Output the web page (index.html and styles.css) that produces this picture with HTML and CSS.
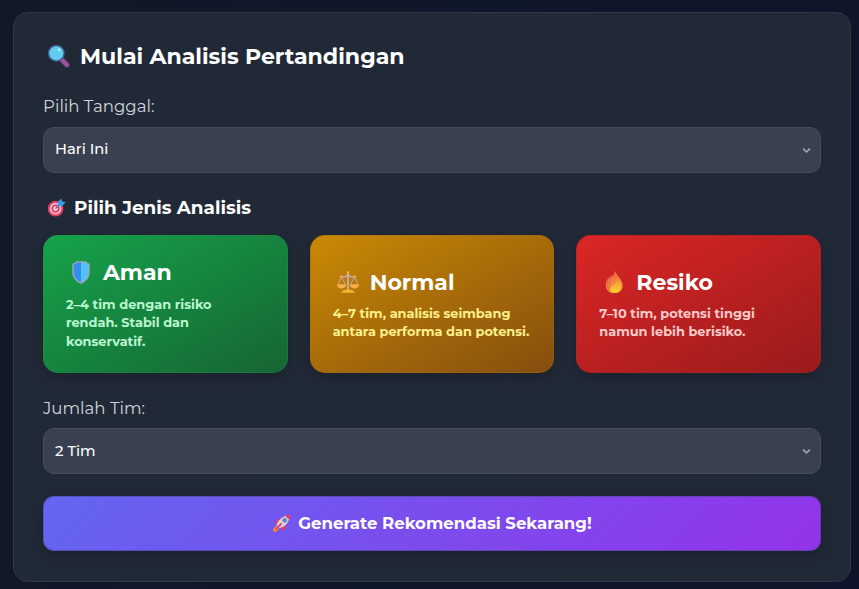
FILE: index.html
```html
<!DOCTYPE html>
<html lang="id">

<head>
    <meta charset="utf-8">
    <meta name="viewport" content="width=device-width, initial-scale=1.0">
    <title>Analisis Pertandingan</title>
    <link rel="stylesheet" href="styles.css">
</head>

<body>

    <main class="panel">
        <h1 class="judul">
            <svg class="ikon-cari" viewBox="0 0 24 24">
                <path d="M14.5 15.5l5.3 5.3" stroke="#6b3f78" stroke-width="5.4" stroke-linecap="round" />
                <path d="M15.8 16.6l4.2 4.2" stroke="#985399" stroke-width="4" stroke-linecap="round" />
                <circle cx="9.3" cy="9.3" r="7.8" fill="#5ecdf0" stroke="#465a8f" stroke-width="1.4" />
                <circle cx="12.1" cy="5.7" r="1.2" fill="#c5effc" />
            </svg>
            <span>Mulai Analisis Pertandingan</span>
        </h1>

        <form>
            <label class="label" for="tanggal">Pilih Tanggal:</label>
            <div class="pilihan">
                <select id="tanggal">
                    <option>Hari Ini</option>
                    <option>Besok</option>
                </select>
                <svg class="panah" viewBox="0 0 8 6"><path d="M1 1.3l3 3 3-3" /></svg>
            </div>

            <h2 class="subjudul">
                <svg class="ikon-target" viewBox="0 0 20 20">
                    <circle cx="9" cy="11.2" r="8.2" fill="#e13d69" />
                    <circle cx="9" cy="11.2" r="6.2" fill="#f2bdca" />
                    <circle cx="9" cy="11.2" r="4.4" fill="#e13d69" />
                    <circle cx="9" cy="11.2" r="2.5" fill="#f8cad5" />
                    <path d="M9 11.2l5.6-5.6" stroke="#7f5c8d" stroke-width="1.3" />
                    <path d="M11 8.8l.4-4.2L15 .6l.8 3.2 3.9.8-4.2 4.1z" fill="#35a8ee" />
                    <path d="M12.7 7.3l4-4" stroke="#286fb0" stroke-width=".8" />
                </svg>
                <span>Pilih Jenis Analisis</span>
            </h2>

            <div class="jenis">
                <article class="kartu aman">
                    <h3>
                        <svg viewBox="0 0 24 24">
                            <path d="M4 4.2q2-.2 3.4-2.3h9.2Q18 4 20 4.2v8.3q0 6.8-8 10.7-8-3.9-8-10.7z" fill="#368df1" />
                            <path d="M12 1.9h4.6Q18 4 20 4.2v8.3q0 6.8-8 10.7z" fill="#52c3fa" />
                            <path d="M4 4.2q2-.2 3.4-2.3h9.2Q18 4 20 4.2v8.3q0 6.8-8 10.7-8-3.9-8-10.7z" fill="none" stroke="#a6a6b8" stroke-width="1.4" />
                        </svg>
                        <span>Aman</span>
                    </h3>
                    <p>2–4 tim dengan risiko<br>rendah. Stabil dan<br>konservatif.</p>
                </article>
                <article class="kartu normal">
                    <h3>
                        <svg viewBox="0 0 24 24">
                            <g fill="none" stroke="#c4b0b4" stroke-width=".9">
                                <path d="M12 3v17" stroke-width="1.8" />
                                <path d="M4.7 6.4q4 2 7.3-1.6 3.3 3.6 7.3 1.6" stroke-width="1.3" />
                                <path d="M5.5 7L1.7 14.5M5.5 7l4 7.5M18.5 7l-4 7.5M18.5 7l3.8 7.5" />
                            </g>
                            <path d="M.8 14.2h9.6q-1 4.3-4.8 4.3T.8 14.2zM13.6 14.2h9.6q-1 4.3-4.8 4.3t-4.8-4.3z" fill="#f9ad4c" />
                            <path d="M5.3 22.8q.8-2.9 6.7-3.2 5.9.3 6.7 3.2z" fill="#f7b536" />
                            <circle cx="12" cy="2.5" r="1.5" fill="#f6a83c" />
                            <circle cx="5.3" cy="6.6" r="1.3" fill="#f6a35c" />
                            <circle cx="18.7" cy="6.6" r="1.3" fill="#f6a35c" />
                        </svg>
                        <span>Normal</span>
                    </h3>
                    <p>4–7 tim, analisis seimbang<br>antara performa dan potensi.</p>
                </article>
                <article class="kartu resiko">
                    <h3>
                        <svg viewBox="0 0 24 24">
                            <defs>
                                <linearGradient id="api" x1="0" y1="0" x2=".5" y2="1">
                                    <stop offset="0" stop-color="#ef484b" />
                                    <stop offset=".65" stop-color="#f58a3e" />
                                    <stop offset="1" stop-color="#fba52f" />
                                </linearGradient>
                                <linearGradient id="nyala" x1=".6" y1="0" x2=".5" y2="1">
                                    <stop offset="0" stop-color="#f7933b" />
                                    <stop offset="1" stop-color="#ffd236" />
                                </linearGradient>
                            </defs>
                            <path d="M13 .4c1.1 4.6 7.6 9 7.6 15 0 5-3.6 7.7-8 7.700-5 0-8.900-3-8.900-8.200 0-3.100 1.400-5.400 3.100-8l.4 2 1.700-4 .8 2.200C11 5.400 12.500 3.500 13 .4z" fill="url(#api)" />
                            <path d="M5.5 10.5c-.7 4-.2 7.500 2.200 10M8.500 7.500c-2 5-1.700 8.500-.2 11.500" fill="none" stroke="#d9643f" stroke-width=".8" />
                            <path d="M15.8 9.5c2.500 4.200 4 7.400 2.200 10.600-1.900 3.500-8.500 3.500-9.700-.2-1-3.700 5.200-4 7.500-10.400z" fill="url(#nyala)" />
                        </svg>
                        <span>Resiko</span>
                    </h3>
                    <p>7–10 tim, potensi tinggi<br>namun lebih berisiko.</p>
                </article>
            </div>

            <label class="label" for="jumlah">Jumlah Tim:</label>
            <div class="pilihan">
                <select id="jumlah">
                    <option>2 Tim</option>
                    <option>3 Tim</option>
                    <option>4 Tim</option>
                </select>
                <svg class="panah" viewBox="0 0 8 6"><path d="M1 1.3l3 3 3-3" /></svg>
            </div>

            <button class="generate" type="button">
                <svg viewBox="0 0 18 18">
                    <path d="M5 8.3L1.7 9.5l3-4.3 4-.5zM9.7 13l-1.2 3.8 4.3-3.3.5-4z" fill="#e93e64" />
                    <path d="M4 11l-3 3.2.2 2.6 2.7-.1L7 14z" fill="#fa8b2b" />
                    <path d="M4 13.800Q4 5.500 13.200 1.500l3.300 3.100Q13.500 13.500 4 13.800z" fill="#dcd2e2" />
                    <path d="M12.5 2Q15 .6 17.300.7q.1 2.400-1 4.700z" fill="#ed3d5f" />
                    <path d="M4 14l4.500-4.500" stroke="#e93e64" stroke-width="1.8" stroke-linecap="round" />
                    <circle cx="12" cy="6" r="1.9" fill="#4697d5" stroke="#816c9c" stroke-width=".7" />
                </svg>
                <span>Generate Rekomendasi Sekarang!</span>
            </button>
        </form>
    </main>

</body>

</html>
```

FILE: styles.css
```css
* {
    box-sizing: border-box;
}

body {
    margin: 0;
    height: 589px;
    padding: 12px 8px 7px 13px;
    overflow: hidden;
    background: linear-gradient(100deg, #111827, #0f172a 50%, #10142a);
    font-family: Montserrat, Inter, sans-serif;
    color: white;
}

h1,
h2,
h3,
p {
    margin: 0;
}

svg {
    display: block;
    flex: none;
    fill: none;
}

.panel {
    height: 570px;
    padding: 27px 29px 0;
    background: linear-gradient(#212937, #202936);
    border: 1px solid #303947;
    border-radius: 15px;
}

.judul {
    display: flex;
    align-items: center;
    height: 32px;
    margin-bottom: 22px;
    padding-left: 4px;
    font-size: 22.1px;
    font-weight: 700;
}

.ikon-cari {
    width: 24px;
    height: 24px;
    margin-right: 9px;
}

.label {
    display: block;
    height: 25px;
    margin-bottom: 8px;
    line-height: 25px;
    font-size: 16.6px;
    font-weight: 400;
    color: #d1d5db;
}

.pilihan {
    position: relative;
}

select {
    display: block;
    width: 100%;
    height: 46px;
    padding: 0 11px 3px;
    appearance: none;
    background-color: #394150;
    border: 1px solid #454d5b;
    border-radius: 11px;
    font-family: inherit;
    font-size: 14.7px;
    font-weight: 500;
    color: white;
}

#jumlah {
    padding-bottom: 1px;
}

.panah {
    position: absolute;
    right: 10px;
    top: 20px;
    width: 9px;
    height: 7px;
    stroke: #a5abb6;
    stroke-width: 1.4;
}

.subjudul {
    display: flex;
    align-items: center;
    height: 26px;
    margin: 21px 0 15px;
    padding-left: 4px;
    font-size: 18.4px;
    font-weight: 700;
}

.ikon-target {
    width: 19px;
    height: 19px;
    margin-right: 8px;
}

.jenis {
    display: grid;
    grid-template-columns: repeat(3, 1fr);
    grid-gap: 22px;
    margin-bottom: 23px;
}

.kartu {
    display: flex;
    flex-direction: column;
    justify-content: center;
    height: 138px;
    padding: 1px 22px 0;
    border: 1px solid;
    border-radius: 15px;
    box-shadow: 0 5px 12px rgba(0, 0, 0, .18);
}

.kartu h3 {
    display: flex;
    align-items: center;
    height: 29px;
    margin-bottom: 8px;
    padding-left: 3px;
    font-size: 22px;
    font-weight: 700;
}

.kartu svg {
    width: 24px;
    height: 24px;
    margin-right: 10px;
}

.kartu p {
    font-size: 12.9px;
    line-height: 18.4px;
    font-weight: 700;
    white-space: nowrap;
}

.aman {
    background: linear-gradient(to bottom right, #16a34a, #166534) border-box;
    border-color: rgba(34, 140, 70, .4);
}

.aman h3 {
    margin-bottom: 9px;
}

.aman p {
    color: #bbf7d0;
}

.normal {
    background: linear-gradient(to bottom right, #ca8a04, #854d0e) border-box;
    border-color: rgba(165, 108, 12, .5);
}

.normal p {
    color: #fef08a;
}

.resiko {
    background: linear-gradient(to bottom right, #dc2626, #991b1b) border-box;
    border-color: rgba(175, 32, 34, .5);
}

.resiko p {
    color: #fecaca;
}

.generate {
    display: flex;
    align-items: center;
    justify-content: center;
    width: 100%;
    height: 55px;
    margin-top: 22px;
    padding: 0 0 1px;
    border: 1px solid rgba(65, 65, 130, .5);
    border-radius: 11px;
    background: linear-gradient(135deg, #6366f1, #9333ea) border-box;
    box-shadow: 0 5px 14px rgba(0, 0, 0, .2);
    font-family: inherit;
    font-size: 16.55px;
    font-weight: 700;
    color: white;
}

.generate svg {
    width: 19px;
    height: 19px;
    margin-right: 7px;
}

/* keeps the label text where it is while the field moves up a bit */
.jenis + .label {
    margin-bottom: 7px;
}
```
